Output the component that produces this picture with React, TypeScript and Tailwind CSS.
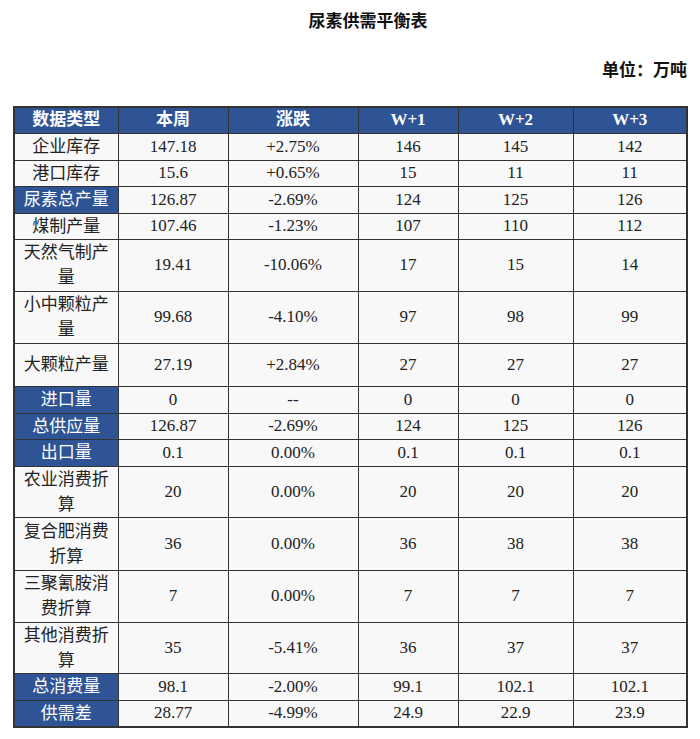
const headers = ["数据类型", "本周", "涨跌", "W+1", "W+2", "W+3"];

type Row = {
  label: string;
  values: string[];
  h: string;
  blue?: boolean;
};

const rows: Row[] = [
  { label: "企业库存", values: ["147.18", "+2.75%", "146", "145", "142"], h: "h-[27px]" },
  { label: "港口库存", values: ["15.6", "+0.65%", "15", "11", "11"], h: "h-[26px]" },
  { label: "尿素总产量", values: ["126.87", "-2.69%", "124", "125", "126"], h: "h-[27px]", blue: true },
  { label: "煤制产量", values: ["107.46", "-1.23%", "107", "110", "112"], h: "h-[26px]" },
  { label: "天然气制产量", values: ["19.41", "-10.06%", "17", "15", "14"], h: "h-[52px]" },
  { label: "小中颗粒产量", values: ["99.68", "-4.10%", "97", "98", "99"], h: "h-[52px]" },
  { label: "大颗粒产量", values: ["27.19", "+2.84%", "27", "27", "27"], h: "h-[43px]" },
  { label: "进口量", values: ["0", "--", "0", "0", "0"], h: "h-[27px]", blue: true },
  { label: "总供应量", values: ["126.87", "-2.69%", "124", "125", "126"], h: "h-[26px]", blue: true },
  { label: "出口量", values: ["0.1", "0.00%", "0.1", "0.1", "0.1"], h: "h-[27px]", blue: true },
  { label: "农业消费折算", values: ["20", "0.00%", "20", "20", "20"], h: "h-[51px]" },
  { label: "复合肥消费折算", values: ["36", "0.00%", "36", "38", "38"], h: "h-[53px]" },
  { label: "三聚氰胺消费折算", values: ["7", "0.00%", "7", "7", "7"], h: "h-[52px]" },
  { label: "其他消费折算", values: ["35", "-5.41%", "36", "37", "37"], h: "h-[51px]" },
  { label: "总消费量", values: ["98.1", "-2.00%", "99.1", "102.1", "102.1"], h: "h-[27px]", blue: true },
  { label: "供需差", values: ["28.77", "-4.99%", "24.9", "22.9", "23.9"], h: "h-[27px]", blue: true },
];

const font = "font-['Liberation_Serif','Noto_Sans_CJK_SC',serif]";

export default function App() {
  return (
    <div className={`w-[700px] h-[739px] bg-white text-[#222] ${font}`}>
      <div className="pt-[10px] pl-[36px] text-center text-[17px] font-bold leading-[24px] text-[#111]">
        尿素供需平衡表
      </div>
      <div className="mt-[26px] pr-[13px] text-right text-[17px] font-bold leading-[22px] text-[#111]">
        单位：万吨
      </div>
      <div className="mt-[24px] pl-[13px]">
        <table className="w-[673px] table-fixed border-collapse border-2 border-[#333] text-[17px]">
          <colgroup>
            <col className="w-[104px]" />
            <col className="w-[110px]" />
            <col className="w-[130px]" />
            <col className="w-[100px]" />
            <col className="w-[115px]" />
            <col className="w-[114px]" />
          </colgroup>
          <thead>
            <tr className="h-[26px] bg-[#2f5496]">
              {headers.map((t) => (
                <th
                  key={t}
                  className="border-[1.5px] border-[#333] p-0 text-center font-bold leading-[22px] text-white"
                >
                  {t}
                </th>
              ))}
            </tr>
          </thead>
          <tbody>
            {rows.map((r) => (
              <tr key={r.label} className={r.h}>
                <td
                  className={
                    "border-[1.5px] border-[#333] px-[7px] py-0 text-center leading-[25px] " +
                    (r.blue ? "bg-[#2f5496] text-white" : "bg-[#f8f8f8]")
                  }
                >
                  {r.label}
                </td>
                {r.values.map((v, i) => (
                  <td
                    key={i}
                    className="border-[1.5px] border-[#333] bg-[#f8f8f8] p-0 text-center leading-[22px]"
                  >
                    {v}
                  </td>
                ))}
              </tr>
            ))}
          </tbody>
        </table>
      </div>
    </div>
  );
}
